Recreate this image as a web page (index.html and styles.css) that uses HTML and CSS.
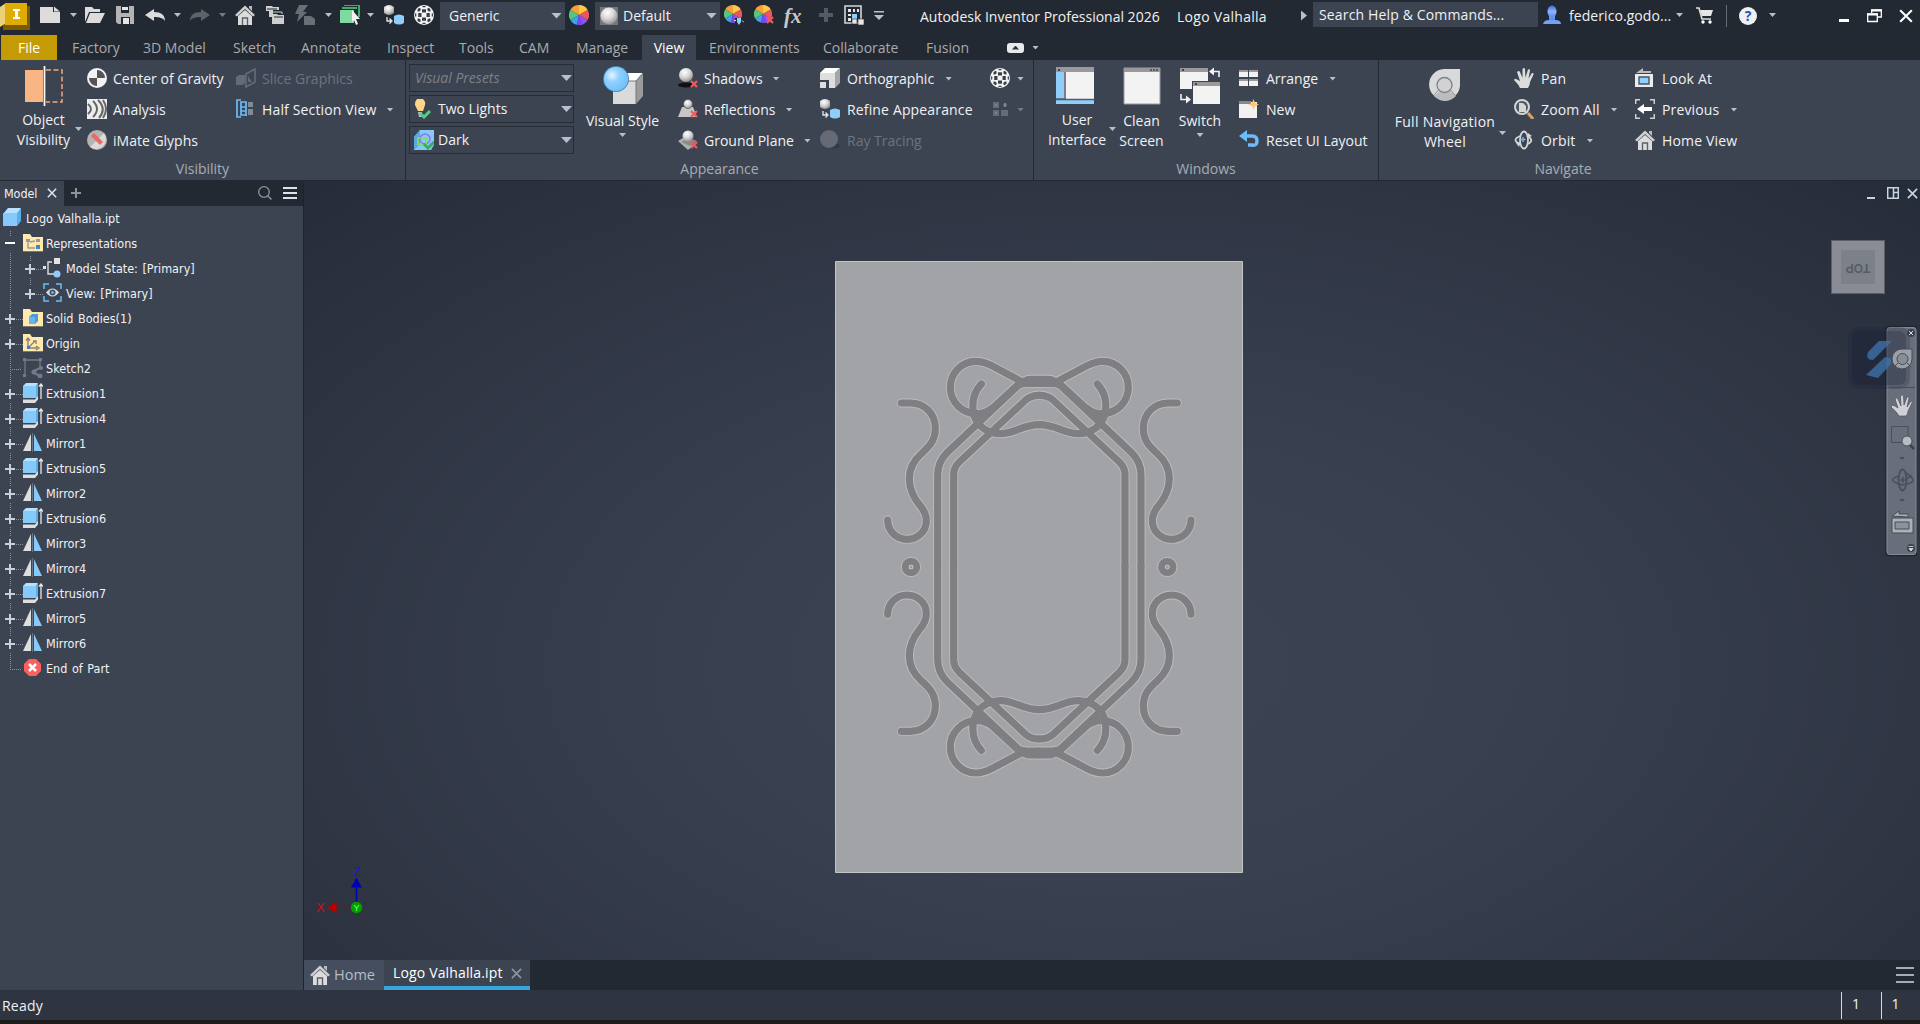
FILE: index.html
```html
<!DOCTYPE html>
<html lang="en">
<head>
<meta charset="utf-8">
<title>Autodesk Inventor Professional 2026 - Logo Valhalla</title>
<link rel="stylesheet" href="styles.css">
</head>
<body>
<svg class="sprite" aria-hidden="true">
  <defs>
    <radialGradient id="ball" cx=".4" cy=".3" r=".75"><stop offset="0" stop-color="#fff"/><stop offset=".5" stop-color="#d6d6d6"/><stop offset="1" stop-color="#8b8b8b"/></radialGradient>
    <radialGradient id="blueball" cx=".35" cy=".35" r=".7"><stop offset="0" stop-color="#e8f5ff"/><stop offset=".4" stop-color="#8fd0ff"/><stop offset="1" stop-color="#6fbff8"/></radialGradient>
    <linearGradient id="userblue" x1="0" y1="0" x2="0" y2="1"><stop offset="0" stop-color="#3a68dc"/><stop offset=".5" stop-color="#8fb4ff"/><stop offset="1" stop-color="#5a86e8"/></linearGradient>
  </defs>
  <symbol id="new" viewBox="0 0 20 20"><path d="M0 2h13v5h7v11H0z" fill="#dcdcdc"/><path d="M14 1.500l6 5h-6z" fill="#dcdcdc"/></symbol>
  <symbol id="open" viewBox="0 0 20 20"><path d="M0 17V2h7l2 2h6v3H4z" fill="#dcdcdc"/><path d="M5 8h15l-5 10H1z" fill="#dcdcdc"/></symbol>
  <symbol id="save" viewBox="0 0 20 20"><path d="M0 1h18v18H2l-2-2z" fill="#b4b4b4"/><path d="M5 1h8v7H5zM5 12h9v7H5z" fill="#232932"/><path d="M6 2h6v3H6zM7 13h6v6H7z" fill="#e6e6e6"/></symbol>
  <symbol id="undo" viewBox="0 0 20 20"><path d="M0 10l9-6v3c7 0 11 3 11 9-2-3-5-4-11-4v4z" fill="#dcdcdc"/></symbol>
  <symbol id="redo" viewBox="0 0 20 20"><path d="M20 10l-9-6v3C4 7 0 10 0 16c2-3 5-4 11-4v4z" fill="#5d6168"/></symbol>
  <symbol id="house" viewBox="0 0 20 20"><path d="M0 10L10 .5l10 9.500-2 1.500-8-7.500-8 7.500z" fill="#cfcfcf"/><path d="M14 1h3v5l-3-3z" fill="#bbb"/><path d="M3 11l7-6 7 6v9H3z" fill="#dcdcdc"/><path d="M7.500 20v-7h5v7" fill="none" stroke="#5a606a" stroke-width="1.400"/></symbol>
  <symbol id="team" viewBox="0 0 20 20"><path d="M0 1h6l1 1h6v3H7v7H3V6H0zM6 9h5l1 1h6v9H6z" fill="#cfcfcf"/><path d="M6 7h10v2" fill="none" stroke="#cfcfcf"/><path d="M1 4h10M8 12h9" stroke="#232932"/></symbol>
  <symbol id="bolt" viewBox="0 0 20 20"><path d="M4 0h9L8 7h4L2 17l2-8H0z" fill="#6a6e75"/><path d="M9 11h7l4 3v6H9z" fill="#6a6e75"/></symbol>
  <symbol id="select" viewBox="0 0 20 20"><path d="M4 0h15v12M2 3h15" fill="none" stroke="#3fae6a" stroke-width="2"/><path d="M0 5h14v13H0z" fill="#80d9a3"/><path d="M12 5l8 9h-4l2 5-2 1-2-5-2 2z" fill="#f2f2f2"/></symbol>
  <symbol id="refine" viewBox="0 0 20 20"><path d="M0 2q5-4 10 0v6q-5 4-10 0z" fill="url(#ball)"/><path d="M10 11q5-3 10 0v7q-5 3-10 0z" fill="#8fcdfb"/><path d="M3 12v4h4M5.500 13.500L8 16l-2.500 2.500" fill="none" stroke="#e8e8e8" stroke-width="1.300"/></symbol>
  <symbol id="soccer" viewBox="0 0 20 20"><circle cx="10" cy="10" r="10" fill="#f4f4f4"/><path d="M8 4.200h4v3.300H8zM8 12.500h4v3.300H8zM4.200 8h3.300v4H4.200zM12.500 8h3.300v4h-3.300zM3.300 4.500l2-1.800 1.500 1-.6 2.300-2.400.7zM16.700 4.500l-2-1.800-1.500 1 .6 2.300 2.400.7zM3.300 15.500l2 1.800 1.500-1-.6-2.300-2.400-.7zM16.700 15.500l-2 1.800-1.500-1 .6-2.300 2.400-.7zM8.500 1h3v1.300h-3zM8.500 17.700h3V19h-3zM1 8.500h1.300v3H1zM17.700 8.500H19v3h-1.300z" fill="#3a3f48"/></symbol>
  <symbol id="wheel" viewBox="0 0 20 20"><path d="M10 10V0a10 10 0 0 1 8.700 5z" fill="#ffc940"/><path d="M10 10V0a10 10 0 0 0-8.700 5z" fill="#f6a03c"/><path d="M10 10L1.300 5a10 10 0 0 0 0 10z" fill="#57c77c"/><path d="M10 10l-8.700 5A10 10 0 0 0 8 19.800z" fill="#3fa2e8"/><path d="M10 10v10a10 10 0 0 0 8.700-5z" fill="#8f54ee"/><path d="M10 10L8 19.800a10 10 0 0 0 6-.6z" fill="#7d45f0"/><path d="M10 10l8.700 5a10 10 0 0 0 0-10z" fill="#e9585f"/></symbol>
  <symbol id="redx" viewBox="0 0 8 8"><path d="M1 1l6 6M7 1L1 7" stroke="#f25a5a" stroke-width="2.200"/></symbol>
  <symbol id="wheeladj" viewBox="0 0 20 20"><use href="#wheel" width="18" height="18"/><path d="M11 13h9v7h-9z" fill="#232932"/><path d="M13 13h4v4l-2 3-2-3z" fill="#8fd0ff"/><path d="M10 15.500h2M18 15.500l2 2" stroke="#ddd"/></symbol>
  <symbol id="wheeldel" viewBox="0 0 20 20"><use href="#wheel" width="18" height="18"/><use href="#redx" x="12" y="11" width="8" height="8"/></symbol>
  <symbol id="plusgray" viewBox="0 0 16 20"><path d="M6 3h4v5h5v4h-5v5H6v-5H1V8h5z" fill="#565b63"/></symbol>
  <symbol id="gridset" viewBox="0 0 20 20"><path d="M1 1h16v17H1z" fill="none" stroke="#d5d5d5" stroke-width="1.600"/><path d="M4 4h3v3H4zM9 4h2v3H9zM13 4h2v3h-2zM4 9h3v2H4zM4 13h3v3H4z" fill="#e6e6e6"/><path d="M8 9h5v5H8z" fill="#8fcdfb"/><path d="M8 14h5v5H8zM14 14h6v6h-6z" fill="#e6e6e6" stroke="#232932" stroke-width=".6"/></symbol>
  <symbol id="cog" viewBox="0 0 20 20"><circle cx="10" cy="10" r="10" fill="#f2f2f2"/><path d="M10 10V2a8 8 0 0 1 8 8zM10 10v8a8 8 0 0 1-8-8z" fill="#555"/></symbol>
  <symbol id="analysis" viewBox="0 0 20 20"><path d="M0 0h20v20H0z" fill="#ededed"/><path d="M1 5q6 5 0 10M6 2q8 8 0 16M11 1q9 9 1 18M16 1q6 9 0 18" fill="none" stroke="#666" stroke-width="2"/></symbol>
  <symbol id="imate" viewBox="0 0 20 20"><circle cx="10" cy="10" r="10" fill="#b5b2b0"/><path d="M3 17A10 10 0 0 0 17 3z" fill="#dadada"/><path d="M4 6l3-3 9 9-3 3z" fill="#ea6a6a"/></symbol>
  <symbol id="slice" viewBox="0 0 20 20"><path d="M0 9l3-2h6v8l-2 2H0z" fill="#656b76"/><path d="M10 6l9-5v13l-9 5z" fill="none" stroke="#656b76" stroke-width="1.600"/><path d="M12 8v6h4" fill="#656b76"/></symbol>
  <symbol id="half" viewBox="0 0 20 20"><path d="M5 1H1v17h4M5 3h5v13H5zM5 8h5M5 12h5M10 3v14" fill="none" stroke="#6cbcf7" stroke-width="1.700"/><path d="M12 3h5v5h-5zM12 10h5v6h-5z" fill="#858a92"/></symbol>
  <symbol id="bulb" viewBox="0 0 20 20"><path d="M3 0h6q3 3 2 6l-2 6H4L1 6q0-4 2-6z" fill="#ffd58c"/><path d="M4 13h4v5H5z" fill="#bbb"/><path d="M6 14l4 4 6-6" fill="none" stroke="#4fcf82" stroke-width="3"/></symbol>
  <symbol id="dark" viewBox="0 0 20 20"><path d="M6 0h14v15l-3 5H0V7z" fill="#8ac8f8"/><path d="M0 7l6-7v15l-6 5z" fill="#5aa8df"/><circle cx="11" cy="9" r="5" fill="none" stroke="#8c74ef" stroke-width="1.500"/><path d="M4 8h8v7H4z" fill="none" stroke="#7ee05a" stroke-width="1.700"/><path d="M10 14l4 4 6-6" fill="none" stroke="#35ae65" stroke-width="3"/></symbol>
  <symbol id="shadow" viewBox="0 0 20 20"><ellipse cx="8" cy="17" rx="8" ry="2.500" fill="#111"/><circle cx="8" cy="7" r="7" fill="url(#ball)"/><use href="#redx" x="12" y="12" width="8" height="8"/></symbol>
  <symbol id="reflect" viewBox="0 0 20 20"><path d="M4 8h11l4 10H0z" fill="#c6c6c6"/><circle cx="10" cy="5" r="4.500" fill="url(#ball)" stroke="#555" stroke-width=".7"/><use href="#redx" x="12" y="11" width="8" height="8"/></symbol>
  <symbol id="ground" viewBox="0 0 20 20"><path d="M0 11l5-3 10 8-5 4z" fill="#b0b0b0"/><path d="M3 12l8-4 8 3-7 5z" fill="#8a8a8a"/><circle cx="10" cy="6" r="5.500" fill="url(#ball)"/><use href="#redx" x="12" y="11" width="8" height="8"/></symbol>
  <symbol id="ortho" viewBox="0 0 20 20"><path d="M0 5l5-5h15l-5 5z" fill="#fff"/><path d="M15 5l5-5v15l-5 5z" fill="#a6a6a6"/><path d="M0 5h15v15H9v-8H0z" fill="#dedede"/><path d="M0 14h6v6H0z" fill="#dedede"/></symbol>
  <symbol id="ray" viewBox="0 0 20 20"><ellipse cx="14" cy="16" rx="6" ry="2.500" fill="#333945"/><circle cx="9" cy="9" r="9" fill="#656a74"/></symbol>
  <symbol id="tiles" viewBox="0 0 20 20"><path d="M3 3h6v6H3zM3 11h6v6H3zM11 11h7v6h-7zM13 5h4v2h-4z" fill="#666c77"/><path d="M14 4h2v4h-2zM5 5h2v2H5zM5 13h2v2H5z" fill="#7d838d"/></symbol>
  <symbol id="arrange" viewBox="0 0 20 20"><path d="M0 2h9v7H0zM10 2h9v7h-9zM0 11h9v7H0zM10 11h9v7h-9z" fill="#f2f2f2"/><path d="M0 3h9M10 3h9M0 12h9M10 12h9" stroke="#999" stroke-width="2"/></symbol>
  <symbol id="newwin" viewBox="0 0 20 20"><path d="M0 3h18v16H0z" fill="#f2f2f2"/><path d="M0 3.500h12" stroke="#888" stroke-width="3"/><path d="M14.500 0l1.500 4 4 1.500-4 1.500-1.500 4-1.500-4-4-1.500 4-1.500z" fill="#ffc56b"/></symbol>
  <symbol id="reset" viewBox="0 0 20 20"><path d="M0 6l8-6v12z" fill="#6cbcf7"/><path d="M7 6h6q5 0 5 5t-5 4H9" fill="none" stroke="#6cbcf7" stroke-width="3.500"/></symbol>
  <symbol id="hand" viewBox="0 0 20 20"><path d="M6 20q-1-3-6-8 1-2 3-.5L6 13 3 4q2-2 3 0l2.500 6L8.500 1q1.500-2 2.500 0l.5 8.500L14 1.500q2-1 2 1l-1.500 8L18 5q2-.5 1.500 1.500L16 14q0 3-2 6z" fill="#dcdcdc"/></symbol>
  <symbol id="zoom" viewBox="0 0 20 20"><path d="M14 14l5 6" stroke="#d7a25e" stroke-width="3"/><circle cx="8" cy="8" r="7" fill="#4e5663" stroke="#d5d5d5" stroke-width="2"/><path d="M5 4h4l3 3v6H5z" fill="#d5d5d5"/></symbol>
  <symbol id="orbit" viewBox="0 0 20 20"><ellipse cx="10" cy="10" rx="4" ry="8.500" fill="none" stroke="#d5d5d5" stroke-width="1.800"/><path d="M6 6Q-3 10 6 14M13 6q8 4 1 8" fill="none" stroke="#d5d5d5" stroke-width="1.800"/><path d="M10 7v6M7 10h6" stroke="#3c4452" stroke-width="4"/><path d="M9 7v5M6.500 9.500h5" stroke="#5fb8f5" stroke-width="1.500"/><path d="M2 13l5-1-2 5zM14 3l-1 5 5-2z" fill="#d5d5d5"/></symbol>
  <symbol id="lookat" viewBox="0 0 20 20"><path d="M0 6h18v13H0z" fill="#ececec"/><path d="M1 5l7-5v3h8v2z" fill="#bbb"/><path d="M4 9h10v7H4z" fill="#8fd0ff" stroke="#4a515e" stroke-width="1.400"/></symbol>
  <symbol id="prev" viewBox="0 0 20 20"><path d="M.7 5V.7H5M15 .7h4.300V5M19.300 15v4.300H15M5 19.300H.7V15" fill="none" stroke="#d0d0d0" stroke-width="1.400"/><path d="M2 10l7-5v3h8v4H9v3z" fill="#fff"/></symbol>
  <symbol id="bigwheel" viewBox="0 0 32 32"><path d="M15 0h16v17A15.500 15.500 0 1 1 15 0z" fill="#d9d9d9"/><path d="M5 27l6-5q5 3 10 0l6 5q-5 5-11 5T5 27z" fill="#bcbcbc"/><circle cx="15.500" cy="16" r="7.500" fill="#d2d2d2" stroke="#7d828b" stroke-width="1.300"/><path d="M9.500 21L5 26M21.500 21l4.500 5" stroke="#8b9098"/></symbol>
  <symbol id="objvis" viewBox="0 0 40 40"><path d="M1 4h18v32H1z" fill="#f9b583"/><path d="M22 4h16v32H22" fill="none" stroke="#f0a878" stroke-width="1.500" stroke-dasharray="5 2.500"/><path d="M20.500 0v40" stroke="#fff" stroke-width="1.700"/></symbol>
  <symbol id="vstyle" viewBox="0 0 40 40"><path d="M10 15l7-8h23l-7 8z" fill="#fff"/><path d="M10 15h23v23H10z" fill="#dadada"/><path d="M33 15l7-8v23l-7 8z" fill="#9b9b9b"/><path d="M10 15h23v23M33 15l7-8" fill="none" stroke="#777"/><circle cx="13" cy="13" r="12.700" fill="url(#blueball)" stroke="#2d5f8c" stroke-width=".6"/></symbol>
  <symbol id="userui" viewBox="0 0 38 38"><path d="M0 0h38v37H0z" fill="#f3f3f3"/><path d="M0 0h38v5H0z" fill="#999"/><path d="M0 5h8v27H0zM0 33h38v4H0z" fill="#8fcdfb"/><path d="M9 5v27H0M0 32.500h38" fill="none" stroke="#505a68" stroke-width="1.500"/><path d="M2 2h2v2H2z" fill="#444"/></symbol>
  <symbol id="clean" viewBox="0 0 38 38"><path d="M1 1h36v36H1z" fill="#f3f3f3" stroke="#999"/><path d="M1 1h36v4H1z" fill="#999"/><path d="M27 3h8" stroke="#444" stroke-width="1.500" stroke-dasharray="2 1"/></symbol>
  <symbol id="switch" viewBox="0 0 40 38"><path d="M0 1h28v21H0z" fill="#f3f3f3"/><path d="M0 1h28v4H0z" fill="#999"/><path d="M12 14h28v24H12z" fill="#3c4452"/><path d="M13 15h27v22H13z" fill="#f3f3f3"/><path d="M13 15h27v4H13z" fill="#999"/><path d="M2 2h2v2H2zM15 16h2v2h-2z" fill="#444"/><path d="M31 4.500h8V10M1 27v5.500h8" fill="none" stroke="#f3f3f3" stroke-width="1.600"/><path d="M29 4.500l5-4v8zM11 32.500l-5-4v8z" fill="#f3f3f3"/></symbol>
  <symbol id="user" viewBox="0 0 20 20"><path d="M0 19q1-4 6-4h6q6 0 6 4z" fill="#779ff5"/><path d="M6 15V3q3-5 6 0v12z" fill="url(#userblue)"/><ellipse cx="9" cy="6.500" rx="4.500" ry="6" fill="url(#userblue)"/></symbol>
  <symbol id="cart" viewBox="0 0 20 20"><path d="M1 3h3l3 11h9" fill="none" stroke="#ddd" stroke-width="1.700"/><path d="M5 5h13l-2 6H7z" fill="#e6e6e6"/><circle cx="8" cy="17" r="1.700" fill="#fff"/><circle cx="15" cy="17" r="1.700" fill="#fff"/></symbol>
  <symbol id="part" viewBox="0 0 20 20"><path d="M0 6l5-6h13l-3 6z" fill="#b8e1ff"/><path d="M0 5h14v13H0z" fill="#86c9fb"/><path d="M14 5l4-5v13l-4 5z" fill="#5aaee9"/></symbol>
  <symbol id="folder" viewBox="0 0 20 20"><path d="M0 1h7l2 3h11v14H0z" fill="#ffe9ad"/><path d="M0 18.500h20" stroke="#7d7869"/></symbol>
  <symbol id="freps" viewBox="0 0 20 20"><use href="#folder"/><path d="M3 6h4v3H3zM13 6h4v3h-4z" fill="#999"/><path d="M5 9v6h7M7 9l5-1" fill="none" stroke="#999" stroke-width="1.400"/><path d="M13 12h4v4h-4z" fill="#4288bb"/></symbol>
  <symbol id="fbody" viewBox="0 0 20 20"><use href="#folder"/><path d="M6 9l3-3h6v7l-3 3H6z" fill="#4a9bdb"/><path d="M6 9h6v7H6z" fill="#68b4ee"/></symbol>
  <symbol id="forigin" viewBox="0 0 20 20"><use href="#folder"/><path d="M5 15V6M3 7.500L5 5l2 2.500M5 15h9M13 13l3 2-3 2M6 14l6-6M10 8h3v3" fill="none" stroke="#8a8270" stroke-width="1.400"/><path d="M4 13h3v3H4z" fill="#2484d8"/></symbol>
  <symbol id="mstate" viewBox="0 0 20 20"><path d="M0 9h3M9 4H5v12h6" fill="none" stroke="#ddd" stroke-width="1.400"/><path d="M0 8h3v3H0zM11 0h6v6h-6z" fill="#e3e3e3"/><circle cx="14" cy="16" r="3.500" fill="#8fcdfb"/></symbol>
  <symbol id="viewrep" viewBox="0 0 20 20"><path d="M1 6V1h5M13 1h5v5M18 13v5h-5M6 18H1v-5" fill="none" stroke="#6cbcf7" stroke-width="1.500"/><path d="M3 9.500q6.500-8 13 0-6.500 8-13 0z" fill="#ddd"/><circle cx="9.500" cy="9.500" r="3" fill="#3f5268"/><circle cx="9.500" cy="9.500" r="1.300" fill="#7cc0f5"/></symbol>
  <symbol id="sketch" viewBox="0 0 20 20"><path d="M2 17V2h15v7" fill="none" stroke="#747a85" stroke-width="1.300"/><path d="M0 0h3v3H0zM16 0h3v3h-3zM0 16h3v3H0z" fill="#747a85"/><path d="M9 14l8-4M9 14l8 4" stroke="#747a85" stroke-width="2"/><circle cx="11" cy="14" r="2.500" fill="#747a85"/><circle cx="18" cy="10" r="2" fill="#747a85"/><circle cx="17" cy="18" r="2.500" fill="#747a85"/></symbol>
  <symbol id="extr" viewBox="0 0 20 20"><path d="M0 3l3-3h12l-2 3z" fill="#b8e1ff"/><path d="M0 3h13v12H0z" fill="#86c9fb"/><path d="M13 3l2-3v12l-2 4z" fill="#5aaee9"/><path d="M0 16.500h12l3-4v4L12 20H0z" fill="#dedede"/><path d="M18 1v15M16 3.500L18 1l2 2.500" fill="none" stroke="#e8e8e8" stroke-width="1.300"/></symbol>
  <symbol id="mirror" viewBox="0 0 20 20"><path d="M8 1v17H0z" fill="#dedede"/><path d="M11 1v17h8z" fill="#86c9fb"/><path d="M9.500 0v19" stroke="#6b727e"/></symbol>
  <symbol id="end" viewBox="0 0 20 20"><path d="M6 1h7l5 5v7l-5 5H6l-5-5V6z" fill="#f9605f"/><path d="M6 6l7 7M13 6l-7 7" stroke="#fff" stroke-width="2.600"/></symbol>
  <symbol id="x" viewBox="0 0 12 12"><path d="M1 1l10 10M11 1L1 11" fill="none" stroke="currentColor" stroke-width="1.800"/></symbol>
</svg>

<header class="titlebar">
  <svg class="logo" viewBox="0 0 30 31"><path d="M3 6h27v24H3z" fill="#7c5a02"/><path d="M0 7l6-4v20l-6 4z" fill="#ecd077"/><path d="M5 3h22v22H5z" fill="#deac04"/><path d="M13 9h7v2h-2v6h2v2h-7v-2h2v-6h-2z" fill="#fff"/></svg>
  <svg class="i"><use href="#new"/></svg><i class="caret"></i>
  <svg class="i"><use href="#open"/></svg>
  <svg class="i"><use href="#save"/></svg>
  <svg class="i"><use href="#undo"/></svg><i class="caret"></i>
  <svg class="i"><use href="#redo"/></svg><i class="caret dim"></i>
  <svg class="i"><use href="#house"/></svg>
  <svg class="i"><use href="#team"/></svg>
  <svg class="i"><use href="#bolt"/></svg><i class="caret"></i>
  <svg class="i"><use href="#select"/></svg><i class="caret"></i>
  <svg class="i"><use href="#refine"/></svg>
  <svg class="i"><use href="#soccer"/></svg>
  <div class="pick"><span>Generic</span><i class="caret wide"></i></div>
  <svg class="i"><use href="#wheel"/></svg>
  <div class="pick"><svg class="swatch" viewBox="0 0 18 18"><path d="M0 0h18v18H0z" fill="#777"/><circle cx="9" cy="9" r="8.500" fill="url(#ball)"/></svg><span>Default</span><i class="caret wide"></i></div>
  <svg class="i"><use href="#wheeladj"/></svg>
  <svg class="i"><use href="#wheeldel"/></svg>
  <span class="fx">fx</span>
  <svg class="i"><use href="#plusgray"/></svg>
  <svg class="i"><use href="#gridset"/></svg>
  <i class="more"></i>
  <span class="apptitle">Autodesk Inventor Professional 2026</span>
  <span class="doctitle">Logo Valhalla</span>
  <i class="rcaret"></i>
  <div class="search">Search Help &amp; Commands...</div>
  <svg class="i"><use href="#user"/></svg>
  <span class="username">federico.godo...</span><i class="caret"></i>
  <svg class="i"><use href="#cart"/></svg>
  <i class="divider"></i>
  <span class="help">?</span><i class="caret"></i>
  <i class="min"></i>
  <svg class="winbtn" viewBox="0 0 16 14"><path d="M4.700 4V1h9.600v7H11M.7 5h9.600v7.500H.7z" fill="none" stroke="#fff" stroke-width="1.300"/><path d="M4 1.500h11M0 5.500h11" stroke="#fff" stroke-width="2"/></svg>
  <svg class="close"><use href="#x"/></svg>
</header>

<nav class="tabs">
  <span class="tab file">File</span><span class="tab">Factory</span><span class="tab">3D Model</span><span class="tab">Sketch</span><span class="tab">Annotate</span><span class="tab">Inspect</span><span class="tab">Tools</span><span class="tab">CAM</span><span class="tab">Manage</span><span class="tab active">View</span><span class="tab">Environments</span><span class="tab">Collaborate</span><span class="tab">Fusion</span><i class="pill"></i><i class="caret"></i>
</nav>

<section class="ribbon">
  <div class="panel visibility">
    <div class="tools">
      <div class="big side"><svg><use href="#objvis"/></svg><span>Object<br>Visibility</span><i class="caret"></i></div>
      <div class="col">
        <div class="tool"><svg class="i"><use href="#cog"/></svg>Center of Gravity</div>
        <div class="tool"><svg class="i"><use href="#analysis"/></svg>Analysis</div>
        <div class="tool"><svg class="i"><use href="#imate"/></svg>iMate Glyphs</div>
      </div>
      <div class="col">
        <div class="tool off"><svg class="i"><use href="#slice"/></svg>Slice Graphics</div>
        <div class="tool spaced"><svg class="i"><use href="#half"/></svg>Half Section View<i class="caret"></i></div>
      </div>
    </div>
    <div class="caption">Visibility</div>
  </div>
  <div class="panel appearance">
    <div class="tools">
      <div class="col combos">
        <div class="combo hint">Visual Presets<i class="caret wide"></i></div>
        <div class="combo"><svg class="i"><use href="#bulb"/></svg>Two Lights<i class="caret wide"></i></div>
        <div class="combo"><svg class="i"><use href="#dark"/></svg>Dark<i class="caret wide"></i></div>
      </div>
      <div class="big"><svg><use href="#vstyle"/></svg><span>Visual Style</span><i class="caret"></i></div>
      <div class="col">
        <div class="tool"><svg class="i"><use href="#shadow"/></svg>Shadows<i class="caret"></i></div>
        <div class="tool"><svg class="i"><use href="#reflect"/></svg>Reflections<i class="caret"></i></div>
        <div class="tool"><svg class="i"><use href="#ground"/></svg>Ground Plane<i class="caret"></i></div>
      </div>
      <div class="col">
        <div class="tool"><svg class="i"><use href="#ortho"/></svg>Orthographic<i class="caret"></i></div>
        <div class="tool spaced"><svg class="i"><use href="#refine"/></svg>Refine Appearance</div>
        <div class="tool off"><svg class="i"><use href="#ray"/></svg>Ray Tracing</div>
      </div>
      <div class="col mini">
        <div class="tool"><svg class="i"><use href="#soccer"/></svg><i class="caret"></i></div>
        <div class="tool"><svg class="i"><use href="#tiles"/></svg><i class="caret dim"></i></div>
      </div>
    </div>
    <div class="caption">Appearance</div>
  </div>
  <div class="panel windows">
    <div class="tools">
      <div class="big side"><svg><use href="#userui"/></svg><span>User<br>Interface</span><i class="caret"></i></div>
      <div class="big"><svg><use href="#clean"/></svg><span>Clean<br>Screen</span></div>
      <div class="big"><svg><use href="#switch"/></svg><span>Switch</span><i class="caret"></i></div>
      <div class="col">
        <div class="tool"><svg class="i"><use href="#arrange"/></svg>Arrange<i class="caret"></i></div>
        <div class="tool"><svg class="i"><use href="#newwin"/></svg>New</div>
        <div class="tool"><svg class="i"><use href="#reset"/></svg>Reset UI Layout</div>
      </div>
    </div>
    <div class="caption">Windows</div>
  </div>
  <div class="panel navigate">
    <div class="tools">
      <div class="big side nav"><svg><use href="#bigwheel"/></svg><span>Full Navigation<br>Wheel</span><i class="caret"></i></div>
      <div class="col">
        <div class="tool"><svg class="i"><use href="#hand"/></svg>Pan</div>
        <div class="tool"><svg class="i"><use href="#zoom"/></svg>Zoom All<i class="caret"></i></div>
        <div class="tool"><svg class="i"><use href="#orbit"/></svg>Orbit<i class="caret"></i></div>
      </div>
      <div class="col">
        <div class="tool"><svg class="i"><use href="#lookat"/></svg>Look At</div>
        <div class="tool"><svg class="i"><use href="#prev"/></svg>Previous<i class="caret"></i></div>
        <div class="tool"><svg class="i"><use href="#house"/></svg>Home View</div>
      </div>
    </div>
    <div class="caption">Navigate</div>
  </div>
</section>

<main class="work">
  <aside class="browser">
    <div class="bhead">
      <div class="btab">Model<svg><use href="#x"/></svg></div>
      <i class="add"></i>
      <svg class="mag" viewBox="0 0 14 14"><circle cx="6" cy="6" r="5.300" fill="none" stroke="#8d929b" stroke-width="1.300"/><path d="M10 10l3.500 3.500" stroke="#8d929b" stroke-width="1.500"/></svg>
      <i class="burger"></i>
    </div>
    <div class="node root"><svg class="i"><use href="#part"/></svg>Logo Valhalla.ipt</div>
    <div class="tree">
      <div class="node"><i class="tog minus"></i><svg class="i"><use href="#freps"/></svg>Representations</div>
      <div class="sub">
        <div class="node"><i class="tog"></i><svg class="i"><use href="#mstate"/></svg>Model State: [Primary]</div>
        <div class="node"><i class="tog"></i><svg class="i"><use href="#viewrep"/></svg>View: [Primary]</div>
      </div>
      <div class="node"><i class="tog"></i><svg class="i"><use href="#fbody"/></svg>Solid Bodies(1)</div>
      <div class="node"><i class="tog"></i><svg class="i"><use href="#forigin"/></svg>Origin</div>
      <div class="node"><i class="leaf"></i><svg class="i"><use href="#sketch"/></svg>Sketch2</div>
      <div class="node"><i class="tog"></i><svg class="i"><use href="#extr"/></svg>Extrusion1</div>
      <div class="node"><i class="tog"></i><svg class="i"><use href="#extr"/></svg>Extrusion4</div>
      <div class="node"><i class="tog"></i><svg class="i"><use href="#mirror"/></svg>Mirror1</div>
      <div class="node"><i class="tog"></i><svg class="i"><use href="#extr"/></svg>Extrusion5</div>
      <div class="node"><i class="tog"></i><svg class="i"><use href="#mirror"/></svg>Mirror2</div>
      <div class="node"><i class="tog"></i><svg class="i"><use href="#extr"/></svg>Extrusion6</div>
      <div class="node"><i class="tog"></i><svg class="i"><use href="#mirror"/></svg>Mirror3</div>
      <div class="node"><i class="tog"></i><svg class="i"><use href="#mirror"/></svg>Mirror4</div>
      <div class="node"><i class="tog"></i><svg class="i"><use href="#extr"/></svg>Extrusion7</div>
      <div class="node"><i class="tog"></i><svg class="i"><use href="#mirror"/></svg>Mirror5</div>
      <div class="node"><i class="tog"></i><svg class="i"><use href="#mirror"/></svg>Mirror6</div>
      <div class="node"><i class="leaf"></i><svg class="i"><use href="#end"/></svg>End of Part</div>
    </div>
  </aside>

  <div class="stage">
    <div class="viewport">
      <svg class="model" viewBox="835 261 408 612">
        <defs>
          <g id="quarter" fill="none" stroke-linecap="round" stroke-linejoin="round">
            <path d="M323 682V405Q323 365 352 337L565 136Q575 130 592 130H628"/>
            <path d="M371 682V405Q371 382 388 366L587 180Q602 166 628 166"/>
            <path d="M628 118H600Q592 118 586 122Q578 126 568 121L485 77Q460 64 437 64A77 78 0 0 0 361 142C361 185 395 221 440 221Q466 222 490 202L565 133"/>
            <path d="M454 132C428 160 425 195 432 225C440 255 470 281 512 281C555 281 578 254 628 254"/>
            <path d="M214 189H240C285 189 316 222 316 265C316 300 300 318 275 340C250 362 238 385 238 415C238 450 250 472 268 494C282 510 289 522 289 542C289 575 262 598 231 598C200 598 173 574 173 540"/>
          </g>
          <g id="all">
            <use href="#quarter"/>
            <use href="#quarter" transform="translate(1256 0) scale(-1 1)"/>
            <use href="#quarter" transform="translate(0 1363) scale(1 -1)"/>
            <use href="#quarter" transform="translate(1256 1363) scale(-1 -1)"/>
          </g>
        </defs>
        <path d="M835.500 261.500h407v611h-407z" fill="#a2a3a6" stroke="#c3c4c6"/>
        <g transform="translate(830 340) scale(.33333)">
          <use href="#all" stroke="#bcbcbe" stroke-width="27"/>
          <use href="#all" stroke="#7f7e82" stroke-width="21.500"/>
          <g fill="#7f7e82" stroke="#bcbcbe" stroke-width="3"><circle cx="243" cy="681" r="29"/><circle cx="1012" cy="681" r="29"/></g>
          <g fill="#9b9a9d" stroke="#c6c6c8" stroke-width="3"><path d="M238 676h10v10h-10z"/><circle cx="1012" cy="681" r="6"/></g>
        </g>
      </svg>
      <div class="mdi"><i class="mmin"></i><svg class="mtile" viewBox="0 0 12 12"><path d="M.7.7h10.600v10.600H.7zM6.500 1v10M7 5.500h4" fill="none" stroke="#c6d4e6" stroke-width="1.500"/></svg><svg class="mx"><use href="#x"/></svg></div>
      <div class="cube"><span>TOP</span></div>
      <svg class="navbar" viewBox="0 0 70 234">
        <rect x="39" y="3.500" width="31" height="229" rx="3" fill="#686e7a" stroke="#20252e" stroke-width="1.500"/>
        <rect x="40" y="4.500" width="29" height="227" rx="3" fill="none" stroke="#858a93"/>
        <rect x="1" y="4" width="62" height="62" rx="10" fill="#131d33" opacity=".2"/>
        <rect x="5" y="8" width="54" height="54" rx="7" fill="#131d33" opacity=".25"/>
        <path d="M32 18h13L26 37q-8 0-5-8zM19 52l19-18q8 0 6 7L31 55z" fill="#3e71a8" opacity=".8"/>
        <circle cx="64" cy="10" r="4" fill="#3b414c"/><path d="M62 8l4 4M66 8l-4 4" stroke="#ddd"/>
        <path d="M56 26h9v10a10 10 0 1 1-9-10z" fill="#9a9fa8" stroke="#474d58"/><circle cx="55.500" cy="36" r="5.500" fill="#888d97" stroke="#474d58"/><path d="M51 40l-4 4M60 40l4 4" stroke="#474d58"/>
        <path d="M42 64.500h26" stroke="#454b55"/>
        <path d="M52 93q-2-4-8-9 1-3 4-1l3 2-3-9q2-2 3 0l3 7-.5-10q2-2 3 0l.5 9 3-8q2-1 2 1l-2 9 4-6q2 0 1 2l-4 8q0 3-2 5z" fill="#cfd1d5" stroke="#4a505b" stroke-width=".7"/>
        <path d="M44.500 103.500H61v16H44.500z" fill="none" stroke="#4a505b"/><path d="M62 121l5 5" stroke="#3f444e" stroke-width="2.500"/><circle cx="60" cy="118" r="5" fill="#b8bcc3" stroke="#4a505b"/>
        <path d="M52 134l3 3 3-3zM52 176l3 3 3-3zM52 56l3 3 3-3z" fill="#4a505b"/>
        <ellipse cx="55.500" cy="157" rx="4" ry="10.500" fill="none" stroke="#4a505b" stroke-width="1.800"/><path d="M52 153q-14 4 3 9 18-3 7-9M59 150l5 3-5 3M53 157h6M56 154v6" fill="none" stroke="#4a505b" stroke-width="1.500"/>
        <path d="M45 195h21v15H45z" fill="#adb0b7" stroke="#464c57"/><path d="M45 193l7-5v3h9v3z" fill="#adb0b7" stroke="#464c57"/><path d="M48 199h14v7H48z" fill="#8d939e" stroke="#464c57"/>
        <circle cx="64" cy="225" r="4" fill="#3b414c"/><path d="M61.500 223.500h5M62 225.500h4l-2 2.500z" stroke="#ddd" stroke-width=".8" fill="#ddd"/>
      </svg>
      <svg class="triad" viewBox="0 0 54 54"><path d="M20 44.500h18" stroke="#a00" stroke-width="1.200"/><path d="M12 44.500l9.500-6v12z" fill="#b80000"/><path d="M41.500 40V24" stroke="#0000b4" stroke-width="1.500"/><path d="M41.500 14.500l5.500 10H36z" fill="#0000b8"/><circle cx="41.500" cy="44.500" r="5.700" fill="#00a000"/><text x="38" y="13" fill="#1414f0">Z</text><text x="1.500" y="49" fill="#d81010">X</text><text x="38.500" y="48" class="y" fill="#7dff7d">Y</text></svg>
    </div>
    <div class="docs">
      <div class="doc home"><svg class="i"><use href="#house"/></svg>Home</div>
      <div class="doc current">Logo Valhalla.ipt<svg class="dx"><use href="#x"/></svg></div>
      <i class="burger"></i>
    </div>
  </div>
</main>

<footer class="status"><span class="ready">Ready</span><span class="count">1</span><span class="count">1</span></footer>
</body>
</html>
```
FILE: styles.css
```css
* { box-sizing: border-box; }
body {
  margin: 0; width: 1920px; height: 1024px; overflow: hidden;
  display: grid; grid-template-rows: 35px 25px 121px 809px 34px;
  background: #232932; color: #f0f1f3;
  font: 14px/20px "Open Sans", "Noto Sans", sans-serif;
}
span, div { white-space: nowrap; }
svg { display: block; flex: none; }
.sprite { position: absolute; width: 0; height: 0; }
.i { width: 20px; height: 20px; }
i { display: block; flex: none; }
.caret { width: 7px; height: 4px; background: #b5c0cf; clip-path: polygon(0 0, 100% 0, 50% 100%); }
.caret.wide { width: 11px; height: 6px; }
.caret.dim { background: #747b87; }

/* Title bar */
.titlebar {
  display: grid; align-items: center; height: 28px;
  grid-template-columns: 40px 30px 15px 31px 29px 29px 16px 29px 16px 31px 29px 30px 15px 27px 17px 30px 26px 129px 26px 129px 30px 30px 32px 28px 30px 46px 257px 124px 12px 230px 26px 107px 19px 31px 13px 30px 70px 28px 32px 21px;
}
.titlebar > .i, .titlebar > .caret { margin-top: -1px; }
.logo { width: 30px; height: 31px; }
.pick { width: 125px; height: 28px; background: #3c4452; display: flex; align-items: center; padding: 0 3px 0 9px; }
.pick .caret { margin-left: auto; }
.swatch { width: 18px; height: 18px; margin: 0 5px 0 -4px; }
.fx { font: italic bold 21px/20px "Liberation Serif", serif; color: #c8c8c8; }
.more { width: 10px; height: 9px; background: #b5c0cf; clip-path: polygon(0 0, 100% 0, 100% 1.500px, 0 1.500px, 0 4px, 100% 4px, 50% 100%, 0 4px); }
.apptitle { padding-top: 3px; }
.doctitle { padding-top: 3px; letter-spacing: .28px; }
.rcaret { width: 6px; height: 10px; background: #b5c0cf; clip-path: polygon(0 0, 100% 50%, 0 100%); }
.search { width: 225px; height: 25px; background: #3c4452; padding: 3px 6px; margin-top: -2px; letter-spacing: .15px; }
.username { letter-spacing: .07px; }
.divider { width: 1px; height: 22px; background: #676d76; }
.help { width: 18px; height: 18px; border-radius: 9px; background: #eef0f4; color: #2456b8; font-weight: 700; text-align: center; line-height: 18px; }
.min { width: 10px; height: 3px; background: #fff; margin-top: 10px; }
.winbtn { width: 16px; height: 14px; }
.close { width: 14px; height: 14px; color: #fff; }

/* Ribbon tabs */
.tabs {
  display: grid; align-items: center; color: #a8aaad;
  grid-template-columns: 59px 71px 90px 68px 86px 72px 60px 57px 78px 55px 114px 103px 93px 25px 10px;
  padding-left: 1px;
}
.tab { height: 25px; line-height: 25px; padding-left: 12px; }
.tab.file { width: 56px; background: #c49b05; color: #fff; padding-left: 17px; }
.tab.active { width: 54px; background: #3c4452; color: #fff; padding: 0; text-align: center; }
.pill { width: 17px; height: 10px; border-radius: 3px; background: #e8e9ec; }
.pill::after { content: ""; display: block; width: 7px; height: 4px; margin: 3px 5px; background: #333; clip-path: polygon(0 100%, 100% 100%, 50% 0); }

/* Ribbon */
.ribbon { display: flex; background: #3c4452; border-bottom: 1px solid #232932; }
.panel { display: flex; flex-direction: column; border-right: 1px solid #232932; padding-top: 3px; }
.visibility { width: 406px; }
.appearance { width: 628px; }
.windows { width: 345px; }
.navigate { flex: 1; border-right: 0; }
.tools { display: grid; height: 96px; }
.visibility .tools { grid-template-columns: 87px 149px 1fr; }
.appearance .tools { grid-template-columns: 172px 100px 142px 170px 1fr; }
.windows .tools { grid-template-columns: 84px 48px 73px 1fr; }
.navigate .tools { grid-template-columns: 135px 121px 1fr; }
.col { display: flex; flex-direction: column; }
.tool { display: flex; align-items: center; height: 31px; gap: 6px; }
.appearance .tool, .windows .tool, .navigate .tool { gap: 7px; }
.appearance .col:nth-child(3) .tool { gap: 6px; }
.tool.spaced { letter-spacing: .15px; }
.tool .i { margin-top: -2px; }
.tool .caret { margin-left: 4px; }
.mini .caret { margin-left: 0; }
.navigate .tool { letter-spacing: .15px; }
.tool.off { color: #6d737e; }
.caption { color: #a8acb3; text-align: center; height: 20px; }
.navigate .caption { padding-right: 173px; }
.combos { padding: 1px 0 0 3px; gap: 3px; }
.combo { display: flex; align-items: center; gap: 4px; width: 165px; height: 28px; border: 1px solid #262d37; padding: 0 1px 0 4px; }
.combo .caret { margin-left: auto; }
.combo.hint { color: #7e8186; font-style: italic; padding-left: 5px; }
.big { display: flex; flex-direction: column; align-items: center; padding-top: 3px; text-align: center; }
.big svg { width: 40px; height: 40px; }
.big span { margin-top: 5px; }
.big .caret { margin-top: 2px; }
.big.side { position: relative; }
.big.side span { margin-top: 4px; }
.big.side .caret { position: absolute; top: 64px; right: 5px; margin: 0; }
.appearance .big { width: 89px; }
.windows .big svg { width: 38px; height: 38px; margin-top: 1px; margin-bottom: 1px; }
.windows .big:nth-child(2) { width: 47px; }
.windows .big:nth-child(3) svg { width: 40px; }
.windows .big:nth-child(3) { width: 68px; }
.windows .big.side { width: 86px; }
.windows .big.side svg { margin-left: -4px; }
.windows .big.side .caret { right: 4px; top: 64px; }
.big.nav { width: 132px; }
.big.nav svg { width: 32px; height: 32px; margin-top: 3px; }
.big.nav span { margin-top: 11px; letter-spacing: .28px; }
.big.nav .caret { top: 68px; right: 5px; }

/* Model browser */
.work { display: grid; grid-template-columns: 304px 1fr; }
.browser { background: #3c4452; border-right: 1px solid #1e242c; font: 12.500px/25px "DejaVu Sans Condensed", "DejaVu Sans", sans-serif; word-spacing: 1px; }
.bhead { display: flex; align-items: center; height: 25px; background: #232932; letter-spacing: -.1px; padding-bottom: 1px; }
.btab { display: flex; align-items: center; width: 64px; height: 24px; background: #3c4452; padding-left: 4px; gap: 10px; box-shadow: 0 1px #3c4452; }
.btab svg { width: 10px; height: 10px; color: #e4e6ea; }
.add { width: 10px; height: 10px; margin-left: 7px; background: linear-gradient(#8d929b, #8d929b) 50% / 2px 100% no-repeat, linear-gradient(#8d929b, #8d929b) 50% / 100% 2px no-repeat; }
.mag { width: 14px; height: 14px; margin-left: auto; }
.burger { width: 14px; height: 12px; margin: 0 6px 0 11px; border: solid #e0e2e5; border-width: 2px 0; background: linear-gradient(#e0e2e5, #e0e2e5) 50% / 100% 2px no-repeat; }
.node { display: flex; align-items: center; height: 25px; padding-left: 5px; }
.node .i { margin: -1px 3px 0 0; }
.root { padding-left: 3px; }
.tree {
  background: repeating-linear-gradient(#8b92a0 0 1px, transparent 1px 2px) 10px 0 / 1px calc(100% - 12px) no-repeat;
}
.sub { padding-left: 20px; background: repeating-linear-gradient(#8b92a0 0 1px, transparent 1px 2px) 30px 0 / 1px 38px no-repeat; }
.tog, .leaf { width: 18px; height: 16px; }
.tog {
  background:
    linear-gradient(#c6d1de, #c6d1de) 4px 3px / 2px 10px no-repeat,
    linear-gradient(#c6d1de, #c6d1de) 0 7px / 10px 2px no-repeat,
    linear-gradient(90deg, #8b92a0 1px, transparent 1px) 13px 8px / 2px 1px repeat-x,
    linear-gradient(#3c4452, #3c4452);
}
.tog.minus { background: linear-gradient(#fff, #fff) 0 6px / 10px 2px no-repeat, linear-gradient(#3c4452, #3c4452); }
.leaf { background: repeating-linear-gradient(90deg, #8b92a0 0 1px, transparent 1px 2px) 5px 8px / 11px 1px no-repeat; }

/* Drawing area */
.stage { display: grid; grid-template-rows: 779px 30px; }
.viewport { position: relative; background: radial-gradient(ellipse 66% 78% at 50% 62%, #3c4453 0, #394151 35%, #303644 75%, #262c37 110%); }
.model { position: absolute; left: 531px; top: 80px; width: 408px; height: 612px; }
.mdi { position: absolute; right: 2px; top: 6px; display: flex; align-items: center; height: 12px; }
.mmin { width: 8px; height: 2px; background: #c6d4e6; margin: 9px 12px 0 0; }
.mtile { width: 12px; height: 12px; margin-right: 8px; }
.mx { width: 11px; height: 11px; color: #c6d4e6; }
.cube { position: absolute; left: 1527px; top: 59px; width: 54px; height: 54px; background: #898c95; border: 1px solid #5d5f63; display: grid; place-items: center; }
.cube span { width: 34px; height: 34px; background: #7c8089; color: #575c67; font: bold 12px/33px "Liberation Sans", sans-serif; text-align: center; transform: rotate(180deg); }
.navbar { position: absolute; left: 1543px; top: 142px; width: 70px; height: 234px; }
.triad { position: absolute; left: 11px; top: 682px; width: 54px; height: 54px; font: 12px "Liberation Sans", sans-serif; }
.triad .y { font-size: 9px; }
.docs { display: flex; background: #232932; }
.doc { display: flex; align-items: center; height: 30px; }
.home { width: 80px; background: #454e5f; color: #b9bdc4; padding-left: 6px; gap: 4px; font-size: 14.500px; }
.current { width: 146px; background: #3c4452; border-bottom: 4px solid #36a6de; padding-left: 9px; color: #fff; gap: 8px; letter-spacing: .15px; }
.dx { width: 11px; height: 11px; color: #8d95a1; }
.docs .burger { width: 18px; height: 16px; margin: 7px 6px 0 auto; border-color: #a3adbd; background-image: linear-gradient(#a3adbd, #a3adbd); }

/* Status bar */
.status { display: flex; background: #2e3440; border-bottom: 4px solid #1c1c1c; padding-top: 2px; }
.ready { flex: 1; padding: 4px 2px; letter-spacing: .2px; }
.count { width: 39.500px; height: 27px; border-left: 1px solid #d5d7da; padding: 2px 0 0 10px; }
```
